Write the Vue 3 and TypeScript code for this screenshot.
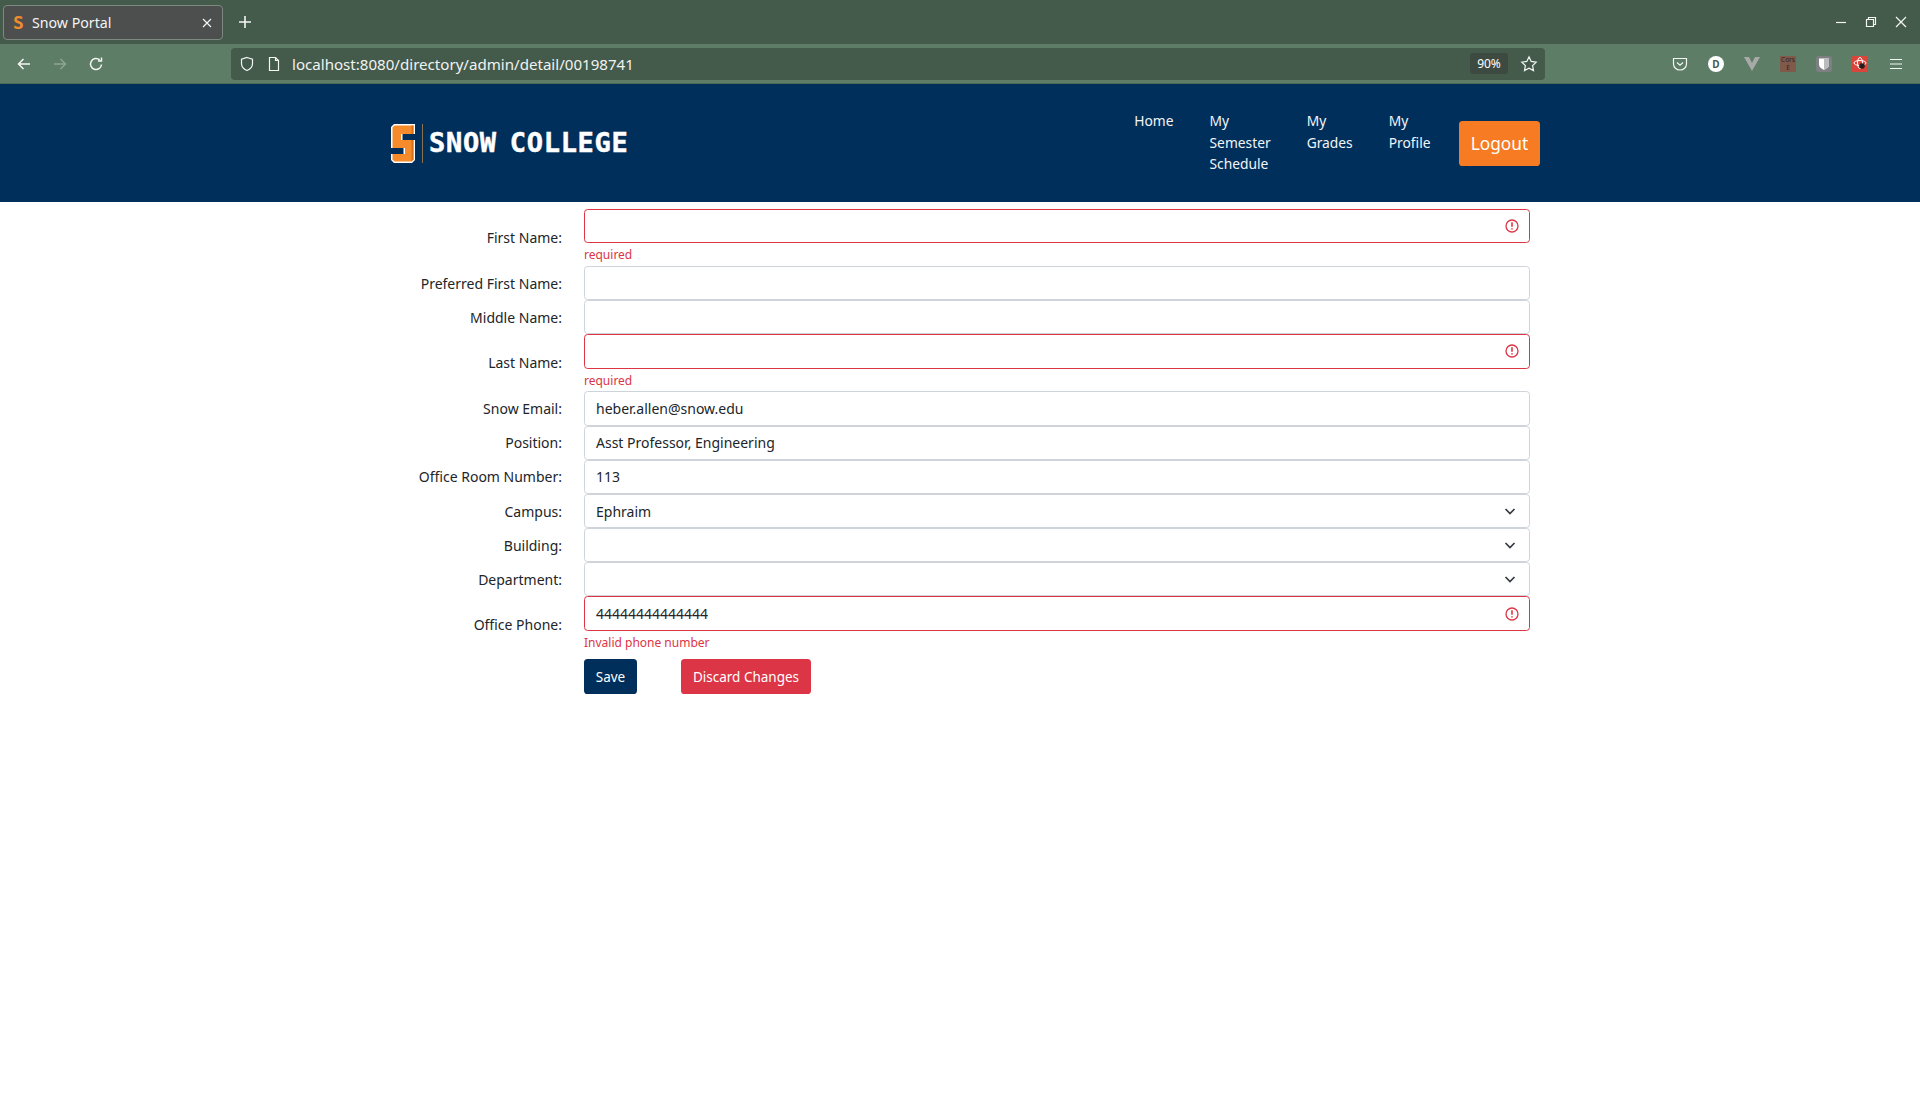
<script setup lang="ts">
interface Field {
  label: string
  value?: string
  error?: string
  select?: boolean
}

const fields: Field[] = [
  { label: 'First Name:', error: 'required' },
  { label: 'Preferred First Name:' },
  { label: 'Middle Name:' },
  { label: 'Last Name:', error: 'required' },
  { label: 'Snow Email:', value: 'heber.allen@snow.edu' },
  { label: 'Position:', value: 'Asst Professor, Engineering' },
  { label: 'Office Room Number:', value: '113' },
  { label: 'Campus:', value: 'Ephraim', select: true },
  { label: 'Building:', select: true },
  { label: 'Department:', select: true },
  { label: 'Office Phone:', value: '44444444444444', error: 'Invalid phone number' }
]

const navItems = [
  { lines: ['Home'] },
  { lines: ['My', 'Semester', 'Schedule'] },
  { lines: ['My', 'Grades'] },
  { lines: ['My', 'Profile'] }
]
</script>

<template>
  <div class="browser">
    <div class="tabstrip">
      <div class="tab">
        <span class="favicon">S</span>
        <span class="tab-title">Snow Portal</span>
        <svg class="tab-close" width="10" height="10" viewBox="0 0 10 10"><path d="M1 1l8 8M9 1l-8 8" /></svg>
      </div>
      <svg class="new-tab" width="14" height="14" viewBox="0 0 14 14"><path d="M7 1v12M1 7h12" /></svg>
      <div class="win-controls">
        <svg width="12" height="12" viewBox="0 0 12 12"><path d="M1 6.500h10" /></svg>
        <svg width="12" height="12" viewBox="0 0 12 12"><path d="M1.500 3.500h7v7h-7zM3.500 3.500v-2h7v7h-2" /></svg>
        <svg width="12" height="12" viewBox="0 0 12 12"><path d="M1 1l10 10M11 1L1 11" /></svg>
      </div>
    </div>
    <div class="toolbar">
      <svg class="tool back" width="16" height="16" viewBox="0 0 16 16"><path d="M14 8H3M7.500 3L2.500 8l5 5" /></svg>
      <svg class="tool fwd" width="16" height="16" viewBox="0 0 16 16"><path d="M2 8h11M8.500 3l5 5-5 5" /></svg>
      <svg class="tool reload" width="16" height="16" viewBox="0 0 16 16"><path d="M13.500 8.500a5.500 5.500 0 1 1-1.800-4.600M13.500 1.500v3.500H10" /></svg>
      <div class="urlbar">
        <svg class="url-icon" width="16" height="16" viewBox="0 0 16 16"><path d="M8 1.500l5.500 1.800v4.200c0 3.400-2.400 5.700-5.500 7-3.100-1.300-5.500-3.600-5.500-7V3.300z" /></svg>
        <svg class="url-icon page" width="16" height="16" viewBox="0 0 16 16"><path d="M3.500 1.500h6l3 3v10h-9zM9.500 1.500v3h3" /></svg>
        <span class="url">localhost:8080/directory/admin/detail/00198741</span>
        <span class="zoom-badge">90%</span>
        <svg class="star" width="18" height="18" viewBox="0 0 18 18"><path d="M9 1.800l2.200 4.600 5 .7-3.600 3.500.9 5L9 13.200l-4.500 2.400.9-5L1.800 7.100l5-.7z" /></svg>
      </div>
      <div class="ext-icons">
        <span class="ext"><svg class="ext-line" width="16" height="16" viewBox="0 0 16 16"><path d="M1.500 2.500h13v5.500a6.500 6 0 0 1-13 0zM5 6.500l3 2.800 3-2.800" /></svg></span>
        <span class="ext"><span class="ext-d">D</span></span>
        <span class="ext"><svg width="16" height="14" viewBox="0 0 16 14"><path d="M0 0h5l3 6 3-6h5L8 14z" fill="#a7aaa8" /></svg></span>
        <span class="ext"><span class="ext-cors">Cors<br />E</span></span>
        <span class="ext"><svg width="16" height="16" viewBox="0 0 16 16"><rect width="16" height="16" rx="3" fill="#7d7f80" /><path d="M3 2.500h10v6c0 2.500-2.200 4-5 5.500-2.800-1.500-5-3-5-5.500z" fill="#fff" /><path d="M8 2.500h5v6c0 2.500-2.200 4-5 5.500z" fill="#b9bbbc" /></svg></span>
        <span class="ext"><svg width="16" height="16" viewBox="0 0 16 16"><rect width="16" height="16" rx="1" fill="#d9453a" /><g fill="none" stroke="#fff" stroke-width="1"><ellipse cx="8" cy="7" rx="6" ry="2.500" /><ellipse cx="8" cy="7" rx="2.500" ry="5.500" /></g><circle cx="10" cy="10" r="2.800" fill="#2a1a1a" /></svg></span>
        <span class="ext"><svg class="ext-line" width="14" height="12" viewBox="0 0 14 12"><path d="M1 1.500h12M1 6h12M1 10.500h12" /></svg></span>
      </div>
    </div>
  </div>

  <header class="site-header">
    <div class="logo">
      <svg class="logo-mark" width="24" height="39" viewBox="0 0 24 39">
        <path d="M3 0H24V36L21 39H3L0 36V3Z" fill="#fff" />
        <path d="M3.500 1.500H22.500V35.500L20.500 37.500H3.500L1.500 35.500V3.500Z" fill="#f68b2c" />
        <path d="M20.500 1.500H22.500V35.500L20.500 37.500Z" fill="#d9701c" />
        <rect x="10" y="10" width="14" height="6" fill="#002f5c" />
        <rect x="10" y="10" width="1.500" height="6" fill="#fff" />
        <rect x="0" y="24" width="14" height="6" fill="#002f5c" />
        <rect x="12.500" y="24" width="1.500" height="6" fill="#fff" />
      </svg>
      <span class="logo-divider"></span>
      <span class="logo-text">SNOW COLLEGE</span>
    </div>
    <nav class="nav">
      <a v-for="item in navItems" :key="item.lines.join()" class="nav-link">
        <span v-for="line in item.lines" :key="line">{{ line }}</span>
      </a>
      <button class="logout" type="button">Logout</button>
    </nav>
  </header>

  <main class="form">
    <div v-for="f in fields" :key="f.label" class="row">
      <label class="label">{{ f.label }}</label>
      <div class="control">
        <div class="input" :class="{ invalid: f.error }">
          <span class="value">{{ f.value }}</span>
          <svg v-if="f.error" class="status" width="14" height="14" viewBox="0 0 14 14">
            <circle cx="7" cy="7" r="6" />
            <path d="M7 3.300v4.500M7 9.300v1.300" />
          </svg>
          <svg v-if="f.select" class="chevron" width="12" height="12" viewBox="0 0 12 12"><path d="M1.500 4l4.500 4.500L10.500 4" /></svg>
        </div>
        <div v-if="f.error" class="error">{{ f.error }}</div>
      </div>
    </div>
    <div class="actions">
      <button class="btn save" type="button">Save</button>
      <button class="btn discard" type="button">Discard Changes</button>
    </div>
  </main>
</template>

<style>
html, body {
  background: #fff;
}
</style>

<style scoped>
.browser {
  font-family: "Noto Sans", sans-serif;
  color: #fff;
}
.tabstrip {
  height: 44px;
  background: #445a4b;
  display: flex;
  align-items: center;
  box-sizing: border-box;
  padding-left: 3px;
}
.tab {
  width: 220px;
  height: 35px;
  margin-top: 1px;
  box-sizing: border-box;
  background: #4c4f4e;
  border: 1px solid #7d8a81;
  border-radius: 4px;
  display: flex;
  align-items: center;
  padding: 0 9px;
  font-size: 14.200px;
}
.favicon {
  color: #f08a2c;
  font-family: "DejaVu Sans Mono", monospace;
  font-weight: 700;
  font-size: 18px;
  width: 11px;
  margin-right: 8px;
}
.tab-title {
  flex: 1;
  color: #f3f3f3;
}
.tab-close {
  margin-right: 1px;
}
.tab-close path,
.new-tab path,
.win-controls path,
.tool path,
.url-icon path,
.star path,
.ext-line path {
  fill: none;
  stroke: #f4f6f4;
  stroke-width: 1.200;
}
.new-tab {
  margin-left: 15px;
}
.new-tab path {
  stroke-width: 1.600;
}
.win-controls {
  margin-left: auto;
  margin-right: 13px;
  display: flex;
  gap: 18px;
}
.toolbar {
  height: 40px;
  background: #5d7d66;
  border-bottom: 1px solid #4f6a57;
  box-sizing: border-box;
  display: flex;
  align-items: center;
  padding-left: 16px;
}
.tool path {
  stroke-width: 1.500;
}
.fwd path {
  stroke: #8ea594;
}
.fwd {
  margin-left: 20px;
}
.reload {
  margin-left: 20px;
}
.urlbar {
  margin-left: 127px;
  width: 1314px;
  height: 32px;
  background: #445a4b;
  border-radius: 4px;
  display: flex;
  align-items: center;
  padding-left: 8px;
  box-sizing: border-box;
  font-size: 15.100px;
}
.url-icon.page {
  margin-left: 11px;
}
.url {
  margin-left: 10px;
  color: #f1f3f1;
  flex: 1;
}
.zoom-badge {
  background: #3c4a41;
  border-radius: 3px;
  font-size: 12px;
  padding: 2px 6px;
  width: 26px;
  text-align: center;
  margin-right: 12px;
}
.star {
  margin-right: 7px;
}
.ext-icons {
  margin-left: 117px;
  display: flex;
  align-items: center;
}
.ext {
  width: 36px;
  display: flex;
  justify-content: center;
  align-items: center;
}
.ext-d {
  width: 16px;
  height: 16px;
  border-radius: 50%;
  background: #fff;
  color: #445a4b;
  font-size: 10px;
  font-weight: 700;
  line-height: 16px;
  text-align: center;
}
.ext-cors {
  width: 16px;
  height: 16px;
  background: #7f5a4b;
  color: #2a2320;
  font-size: 6.500px;
  line-height: 8px;
  text-align: center;
  overflow: hidden;
}
.site-header {
  height: 118px;
  background: #002f5c;
  display: flex;
  align-items: flex-start;
  font-family: "Noto Sans", sans-serif;
  padding-left: 391px;
  padding-right: 380px;
}
.logo {
  display: flex;
  align-items: center;
  margin-top: 39px;
  height: 40px;
}
.logo-divider {
  width: 1px;
  height: 39px;
  background: #8a7350;
  margin-left: 7px;
}
.logo-text {
  margin-left: 6px;
  color: #fff;
  font-family: "DejaVu Sans Mono", monospace;
  font-weight: 700;
  font-size: 27px;
  letter-spacing: 0.700px;
  word-spacing: -4px;
  -webkit-text-stroke: 0.500px #fff;
  line-height: 40px;
  white-space: pre;
}
.nav {
  margin-left: auto;
  display: flex;
  font-size: 13.800px;
  color: #f2f5f8;
}
.nav-link {
  display: flex;
  flex-direction: column;
  padding-top: 26px;
  line-height: 21.600px;
  margin-right: 36px;
}
.logout {
  margin-top: 37px;
  margin-left: -7.500px;
  width: 81px;
  height: 45px;
  border: none;
  border-radius: 3.600px;
  background: #f77b22;
  color: #fff;
  font-family: inherit;
  font-size: 17.300px;
}
.form {
  width: 1146px;
  margin-left: 384px;
  padding-top: 7px;
  font-family: "Noto Sans", sans-serif;
  font-size: 14px;
  color: #212529;
}
.row {
  display: grid;
  grid-template-columns: 178px 946px;
  column-gap: 22px;
  align-items: center;
}
.label {
  text-align: right;
}
.input {
  height: 34.200px;
  box-sizing: border-box;
  border: 1px solid #ced4da;
  border-radius: 3.600px;
  display: flex;
  align-items: center;
  padding: 0 11px;
  background: #fff;
}
.input.invalid {
  border-color: #dc3545;
  padding-right: 10px;
}
.value {
  flex: 1;
}
.status circle {
  fill: none;
  stroke: #dc3545;
  stroke-width: 1.300;
}
.status path {
  fill: none;
  stroke: #dc3545;
  stroke-width: 1.600;
}
.chevron path {
  fill: none;
  stroke: #343a40;
  stroke-width: 1.700;
}
.chevron {
  margin-right: 2px;
}
.error {
  height: 22.800px;
  color: #dc3545;
  font-size: 12px;
  line-height: 24.500px;
}
.actions {
  margin-left: 200px;
  margin-top: 6px;
  display: flex;
  gap: 44px;
}
.btn {
  height: 35px;
  border: none;
  border-radius: 3.600px;
  color: #fff;
  font-family: inherit;
  font-size: 13.500px;
  padding: 0;
}
.save {
  width: 53px;
  background: #002f5c;
}
.discard {
  width: 130px;
  background: #dc3545;
}
</style>
